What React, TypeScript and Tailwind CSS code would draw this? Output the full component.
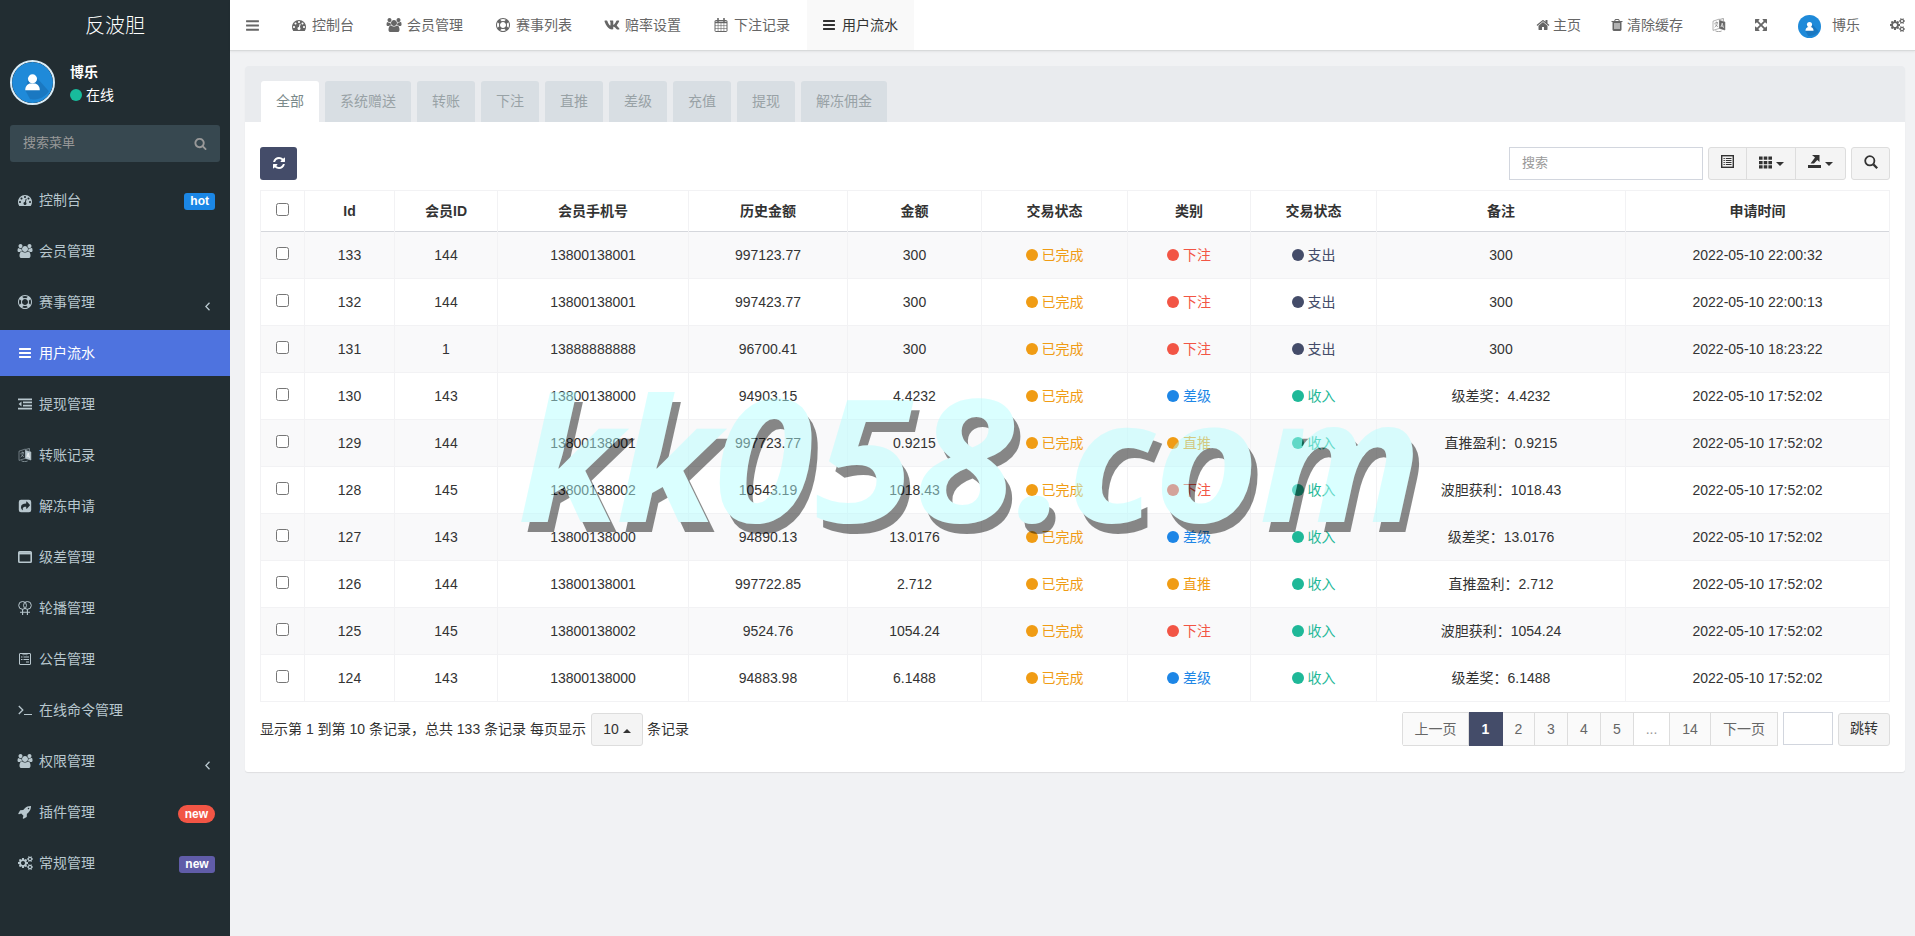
import React, { useState } from 'react'
import { FaVk } from 'react-icons/fa'

const PATHS = {
  bars: 'M1664 1344v128q0 26-19 45t-45 19h-1408q-26 0-45-19t-19-45v-128q0-26 19-45t45-19h1408q26 0 45 19t19 45zm0-512v128q0 26-19 45t-45 19h-1408q-26 0-45-19t-19-45v-128q0-26 19-45t45-19h1408q26 0 45 19t19 45zm0-512v128q0 26-19 45t-45 19h-1408q-26 0-45-19t-19-45v-128q0-26 19-45t45-19h1408q26 0 45 19t19 45z',
  dashboard:
    'M384 1152q0-53-37.5-90.5t-90.5-37.5-90.5 37.5-37.5 90.5 37.5 90.5 90.5 37.5 90.5-37.5 37.5-90.5zm192-448q0-53-37.5-90.5t-90.5-37.5-90.5 37.5-37.5 90.5 37.5 90.5 90.5 37.5 90.5-37.5 37.5-90.5zm428 481l101-382q6-26-7.5-48.5t-38.5-29.5-48 6.5-30 39.5l-101 382q-60 5-107 43.5t-63 98.5q-20 77 20 146t117 89 146-20 89-117q16-60-6-117t-72-91zm660-33q0-53-37.5-90.5t-90.5-37.5-90.5 37.5-37.5 90.5 37.5 90.5 90.5 37.5 90.5-37.5 37.5-90.5zm-640-640q0-53-37.5-90.5t-90.5-37.5-90.5 37.5-37.5 90.5 37.5 90.5 90.5 37.5 90.5-37.5 37.5-90.5zm448 192q0-53-37.5-90.5t-90.5-37.5-90.5 37.5-37.5 90.5 37.5 90.5 90.5 37.5 90.5-37.5 37.5-90.5zm320 448q0 261-141 483-19 29-54 29h-1402q-35 0-54-29-141-221-141-483 0-182 71-348t191-286 286-191 348-71 348 71 286 191 191 286 71 348z',
  ring: 'M896 0q182 0 348 71t286 191 191 286 71 348-71 348-191 286-286 191-348 71-348-71-286-191-191-286-71-348 71-348 191-286 286-191 348-71zm0 128q-190 0-361 90l194 194q82-28 167-28t167 28l194-194q-171-90-361-90zm-678 1129l194-194q-28-82-28-167t28-167l-194-194q-90 171-90 361t90 361zm678 407q190 0 361-90l-194-194q-82 28-167 28t-167-28l-194 194q171 90 361 90zm0-384q159 0 271.5-112.5t112.5-271.5-112.5-271.5-271.5-112.5-271.5 112.5-112.5 271.5 112.5 271.5 271.5 112.5zm484-217l194 194q90-171 90-361t-90-361l-194 194q28 82 28 167t-28 167z',
  home: 'M1472 992v480q0 26-19 45t-45 19h-384v-384h-256v384h-384q-26 0-45-19t-19-45v-480q0-1 .5-3t.5-3l575-474 575 474q1 2 1 6zm223-69l-62 74q-8 9-21 11h-3q-13 0-21-7l-692-577-692 577q-12 8-24 7-13-2-21-11l-62-74q-8-10-7-23.5t11-21.5l719-599q32-26 76-26t76 26l244 204v-195q0-14 9-23t23-9h192q14 0 23 9t9 23v408l219 182q10 8 11 21.5t-7 23.5z',
  trash:
    'M704 1376v-704q0-14-9-23t-23-9h-64q-14 0-23 9t-9 23v704q0 14 9 23t23 9h64q14 0 23-9t9-23zm256 0v-704q0-14-9-23t-23-9h-64q-14 0-23 9t-9 23v704q0 14 9 23t23 9h64q14 0 23-9t9-23zm256 0v-704q0-14-9-23t-23-9h-64q-14 0-23 9t-9 23v704q0 14 9 23t23 9h64q14 0 23-9t9-23zm-544-992h448l-48-117q-7-9-17-11h-317q-10 2-17 11zm928 32v64q0 14-9 23t-23 9h-96v948q0 83-47 143.5t-113 60.5h-832q-66 0-113-58.5t-47-141.5v-952h-96q-14 0-23-9t-9-23v-64q0-14 9-23t23-9h309l70-167q15-37 54-63t79-26h320q40 0 79 26t54 63l70 167h309q14 0 23 9t9 23z',
  arrows:
    'M1411 541l-355 355 355 355 144-144q29-31 70-14 39 17 39 59v448q0 26-19 45t-45 19h-448q-42 0-59-40-17-39 14-69l144-144-355-355-355 355 144 144q31 30 14 69-17 40-59 40h-448q-26 0-45-19t-19-45v-448q0-42 40-59 39-17 69 14l144 144 355-355-355-355-144 144q-19 19-45 19-12 0-24-5-40-17-40-59v-448q0-26 19-45t45-19h448q42 0 59 40 17 39-14 69l-144 144 355 355 355-355-144-144q-31-30-14-69 17-40 59-40h448q26 0 45 19t19 45v448q0 42-39 59-13 5-25 5-26 0-45-19z',
  refresh:
    'M1639 1056q0 5-1 7-64 268-268 434.5t-478 166.5q-146 0-282.5-55t-243.5-157l-129 129q-19 19-45 19t-45-19-19-45v-448q0-26 19-45t45-19h448q26 0 45 19t19 45-19 45l-137 137q71 66 161 102t187 36q134 0 250-65t186-179q11-17 53-117 8-23 30-23h192q13 0 22.5 9.5t9.5 22.5zm25-800v448q0 26-19 45t-45 19h-448q-26 0-45-19t-19-45 19-45l138-138q-148-137-349-137-134 0-250 65t-186 179q-11 17-53 117-8 23-30 23h-199q-13 0-22.5-9.5t-9.5-22.5v-7q65-268 270-434.5t480-166.5q146 0 284 55.5t245 156.5l130-129q19-19 45-19t45 19 19 45z',
  rocket:
    'M1440 448q0-40-28-68t-68-28-68 28-28 68 28 68 68 28 68-28 28-68zm224-288q0 249-75.5 430.5t-253.5 360.5q-81 80-195 176l-20 379q-2 16-16 26l-384 224q-7 4-16 4-12 0-23-9l-64-64q-13-14-8-32l85-276-281-281-276 85q-3 1-9 1-14 0-23-9l-64-64q-17-19-5-39l224-384q10-14 26-16l379-20q96-114 176-195 188-187 358-258t431-71q14 0 24 9.5t10 22.5z',
  search:
    'M1216 832q0-185-131.5-316.5t-316.5-131.5-316.5 131.5-131.5 316.5 131.5 316.5 316.5 131.5 316.5-131.5 131.5-316.5zm512 832q0 52-38 90t-90 38q-54 0-90-38l-343-342q-179 124-399 124-143 0-273.5-55.5t-225-150-150-225-55.5-273.5 55.5-273.5 150-225 225-150 273.5-55.5 273.5 55.5 225 150 150 225 55.5 273.5q0 220-124 399l343 343q37 37 37 90z',
}

const USERS =
  'M657 896q-162 5-265 128h-134q-82 0-138-40.5t-56-118.5q0-353 124-353 6 0 43.5 21t97.5 42.5 119 21.5q67 0 133-23-5 37-5 66 0 159 90 293zm1071 637q0 120-73 189.5t-194 69.5h-874q-121 0-194-69.5t-73-189.5q0-53 3.5-103.5t14-109 26.5-108.5 43-97.5 62-81 85.5-53.5 111.5-20q10 0 43 21.5t73 48 107 48 135 21.5 135-21.5 107-48 73-48 43-21.5q61 0 111.5 20t85.5 53.5 62 81 43 97.5 26.5 108.5 14 109 3.5 103.5zm-1024-1277q0 106-75 181t-181 75-181-75-75-181 75-181 181-75 181 75 75 181zm704 384q0 159-112.5 271.5t-271.5 112.5-271.5-112.5-112.5-271.5 112.5-271.5 271.5-112.5 271.5 112.5 112.5 271.5zm576 225q0 78-56 118.5t-138 40.5h-134q-103-123-265-128 90-134 90-293 0-29-5-66 66 23 133 23 59 0 119-21.5t97.5-42.5 43.5-21q124 0 124 353zm-128-609q0 106-75 181t-181 75-181-75-75-181 75-181 181-75 181 75 75 181z'

const COGS =
  'M896 896q0-106-75-181t-181-75-181 75-75 181 75 181 181 75 181-75 75-181zm768 512q0-52-38-90t-90-38-90 38-38 90q0 53 37.5 90.5t90.5 37.5 90.5-37.5 37.5-90.5zm0-1024q0-52-38-90t-90-38-90 38-38 90q0 53 37.5 90.5t90.5 37.5 90.5-37.5 37.5-90.5zm-384 421v185q0 10-7 19.5t-16 10.5l-155 24q-11 35-32 76 34 48 90 115 7 11 7 20 0 12-7 19-23 30-82.5 89.5t-78.5 59.5q-11 0-21-7l-115-90q-37 19-77 31-11 108-23 155-7 24-30 24h-186q-11 0-20-7.5t-10-17.5l-23-153q-34-10-75-31l-118 89q-7 7-20 7-11 0-21-8-144-133-144-160 0-9 7-19 10-14 41-53t47-61q-23-44-35-82l-152-24q-10-1-17-9.5t-7-19.5v-185q0-10 7-19.5t16-10.5l155-24q11-35 32-76-34-48-90-115-7-11-7-20 0-12 7-20 22-30 82-89t79-59q11 0 21 7l115 90q34-18 77-32 11-108 23-154 7-24 30-24h186q11 0 20 7.5t10 17.5l23 153q34 10 75 31l118-89q8-7 20-7 11 0 21 8 144 133 144 160 0 9-7 19-12 16-42 54t-45 60q23 48 34 82l152 23q10 2 17 10.5t7 19.5zm640 533v140q0 16-149 31-12 27-30 52 51 113 51 138 0 4-4 7-122 71-124 71-8 0-46-47t-52-68q-20 2-30 2t-30-2q-14 21-52 68t-46 47q-2 0-124-71-4-3-4-7 0-25 51-138-18-25-30-52-149-15-149-31v-140q0-16 149-31 13-29 30-52-51-113-51-138 0-4 4-7 4-2 35-20t59-34 30-16q8 0 46 46.5t52 67.5q20-2 30-2t30 2q51-71 92-112l6-2q4 0 124 70 4 3 4 7 0 25-51 138 17 23 30 52 149 15 149 31zm0-1024v140q0 16-149 31-12 27-30 52 51 113 51 138 0 4-4 7-122 71-124 71-8 0-46-47t-52-68q-20 2-30 2t-30-2q-14 21-52 68t-46 47q-2 0-124-71-4-3-4-7 0-25 51-138-18-25-30-52-149-15-149-31v-140q0-16 149-31 13-29 30-52-51-113-51-138 0-4 4-7 4-2 35-20t59-34 30-16q8 0 46 46.5t52 67.5q20-2 30-2t30 2q51-71 92-112l6-2q4 0 124 70 4 3 4 7 0 25-51 138 17 23 30 52 149 15 149 31z'

const Fa = ({
  name,
  className = 'size-3.5',
}: {
  name: keyof typeof PATHS
  className?: string
}) => (
  <svg viewBox="0 0 1792 1792" fill="currentColor" className={className}>
    <path d={PATHS[name]} />
  </svg>
)

const Users = () => (
  <svg viewBox="0 0 2048 1792" fill="currentColor" className="h-3.5 w-4">
    <path d={USERS} />
  </svg>
)

const Cogs = () => (
  <svg viewBox="0 0 1920 1792" fill="currentColor" className="h-3.5 w-[15px]">
    <path d={COGS} />
  </svg>
)

const Calendar = () => (
  <svg viewBox="0 0 14 14" fill="none" stroke="currentColor" className="size-3.5">
    <rect x="1" y="2.5" width="12" height="11" rx="0.6" />
    <path d="M1 4.4h12" strokeWidth="1.6" />
    <path d="M1 7.6h12M1 10.5h12M4.1 5v8.5M7 5v8.5M9.9 5v8.5" strokeWidth="0.6" />
    <path d="M4 .4v3M10 .4v3" strokeWidth="1.6" strokeLinecap="round" />
  </svg>
)

const Outdent = () => (
  <svg viewBox="0 0 14 14" fill="currentColor" className="size-3.5">
    <path d="M0 1.5h14v1.7H0zM5 4.6h9v1.7H5zM5 7.7h9v1.7H5zM0 10.8h14v1.7H0zM3.5 4.4v5.2L.6 7z" />
  </svg>
)

const Language = () => (
  <svg viewBox="0 0 14 14" fill="none" stroke="currentColor" className="size-3.5">
    <path d="M1 3.2 7.4 1v9.4L1 12.4z" strokeWidth="0.5" />
    <path d="M2.4 5.4 6 4.4M4.3 3.6v1.2M5.4 5c-.5 2-1.4 3.3-2.8 4.2M3.1 6.4c.6 1 1.5 1.7 2.9 2.2" strokeWidth="0.6" />
    <path d="M7.6 2.4 12.9 4v8L7.6 10.4z" fill="currentColor" strokeWidth="0.6" />
    <path d="M3.4 12.8c2 1.1 4.2 1.1 6.2.2M8 1.4l3.4-.9v2.4" strokeWidth="0.6" />
    <path d="m8.900 9.100 1.300-4 1.300 4.800M9.300 7.900l1.800.500" stroke="#fff" strokeOpacity="0.800" strokeWidth="0.800" />
  </svg>
)

const ShareSquare = () => (
  <svg viewBox="0 0 14 14" fill="currentColor" className="size-3.5">
    <path
      fillRule="evenodd"
      d="M3 .8h8A2.200 2.200 0 0 1 13.200 3v8A2.200 2.200 0 0 1 11 13.200H3A2.200 2.200 0 0 1 .8 11V3A2.200 2.200 0 0 1 3 .8zM8.200 2.800v1.700C4.800 4.500 3 5.800 3 8.200c0 1.200.6 2.200 1.600 3 .2.100.400 0 .300-.2C4.300 8.500 5.400 7.700 8.200 7.700v1.700c0 .4.400.5.700.3l2.900-3.200c.2-.2.200-.5 0-.7L8.900 2.500c-.3-.2-.7-.1-.7.300z"
    />
  </svg>
)

const Window = () => (
  <svg viewBox="0 0 14 14" fill="none" stroke="currentColor" className="size-3.5">
    <rect x="0.800" y="1.800" width="12.400" height="10.400" rx="0.800" strokeWidth="1.600" />
    <path d="M1 3.300h12" strokeWidth="2.200" />
  </svg>
)

const VenusDouble = () => (
  <svg viewBox="0 0 14 14" fill="none" stroke="currentColor" className="size-3.5">
    <circle cx="4.600" cy="4.400" r="3.900" />
    <circle cx="9.400" cy="4.400" r="3.900" />
    <path d="M4.600 8.300V14M9.400 8.300V14M2 11.300h10" strokeWidth="1.100" />
  </svg>
)

const Wpforms = () => (
  <svg viewBox="0 0 14 14" fill="none" stroke="currentColor" className="size-3.5">
    <rect x="1.500" y="1.500" width="11" height="11" rx="0.500" />
    <path d="M4 1.500 5.700 3 7 1.700 8.300 3 10 1.500" strokeWidth="0.800" />
    <path d="M3 5h1.500M3 7.500h1.500M5.500 5H11M5.500 7.500H11M8 10h3" strokeWidth="1.200" />
  </svg>
)

const Terminal = () => (
  <svg viewBox="0 0 14 14" fill="none" stroke="currentColor" className="size-3.5">
    <path d="m.8 3 4 4-4 4" strokeWidth="1.300" />
    <path d="M6 11.500h8" />
  </svg>
)

const AngleLeft = () => (
  <svg viewBox="0 0 5 9" fill="none" stroke="currentColor" strokeWidth="1.300" className="mt-2 mr-[5px] ml-auto h-[9px] w-[5px]">
    <path d="M4.500.7.900 4.500l3.600 3.800" />
  </svg>
)

const Avatar = ({ className }: { className: string }) => (
  <svg viewBox="0 0 45 45" className={className}>
    <circle cx="22.500" cy="22.500" r="22.500" fill="#1f8ad9" />
    <path d="M17.500 19 14.500 31 20 41c9 1 17-3 20.500-9L27 17z" fill="#176db0" opacity=".6" />
    <circle cx="22.500" cy="18.500" r="5" fill="#fff" />
    <path d="M14.500 31c0-5 3-7.500 6-7.500h4c3 0 6 2.500 6 7.500z" fill="#fff" />
  </svg>
)

const Dot = () => <span className="mr-1 size-3 shrink-0 rounded-full bg-current" />

const Caret = ({ up = false }: { up?: boolean }) => (
  <svg viewBox="0 0 8 4" className="ml-1 h-1 w-2" fill="currentColor">
    <path d={up ? 'M0 4h8L4 0z' : 'M0 0h8L4 4z'} />
  </svg>
)

const menu = [
  { icon: <Fa name="dashboard" />, label: '控制台', badge: 'hot' },
  { icon: <Users />, label: '会员管理' },
  { icon: <Fa name="ring" />, label: '赛事管理', arrow: true },
  { icon: <Fa name="bars" />, label: '用户流水', active: true },
  { icon: <Outdent />, label: '提现管理' },
  { icon: <Language />, label: '转账记录' },
  { icon: <ShareSquare />, label: '解冻申请' },
  { icon: <Window />, label: '级差管理' },
  { icon: <VenusDouble />, label: '轮播管理' },
  { icon: <Wpforms />, label: '公告管理' },
  { icon: <Terminal />, label: '在线命令管理' },
  { icon: <Users />, label: '权限管理', arrow: true },
  { icon: <Fa name="rocket" />, label: '插件管理', badge: 'new' },
  { icon: <Cogs />, label: '常规管理', badge: 'new2' },
]

const navs = [
  { icon: <Fa name="dashboard" />, label: '控制台' },
  { icon: <Users />, label: '会员管理' },
  { icon: <Fa name="ring" />, label: '赛事列表' },
  { icon: <FaVk className="size-4" />, label: '赔率设置' },
  { icon: <Calendar />, label: '下注记录' },
  { icon: <Fa name="bars" />, label: '用户流水', active: true },
]

const tabs = ['全部', '系统赠送', '转账', '下注', '直推', '差级', '充值', '提现', '解冻佣金']

const columns = [
  { title: 'Id', width: 'w-[90px]' },
  { title: '会员ID', width: 'w-[103px]' },
  { title: '会员手机号', width: 'w-[191px]' },
  { title: '历史金额', width: 'w-[159px]' },
  { title: '金额', width: 'w-[134px]' },
  { title: '交易状态', width: 'w-[146px]' },
  { title: '类别', width: 'w-[123px]' },
  { title: '交易状态', width: 'w-[126px]' },
  { title: '备注', width: 'w-[249px]' },
  { title: '申请时间', width: 'w-[264px]' },
]

const rows = [
  ['133', '144', '13800138001', '997123.77', '300', '下注', '支出', '300', '2022-05-10 22:00:32'],
  ['132', '144', '13800138001', '997423.77', '300', '下注', '支出', '300', '2022-05-10 22:00:13'],
  ['131', '1', '13888888888', '96700.41', '300', '下注', '支出', '300', '2022-05-10 18:23:22'],
  ['130', '143', '13800138000', '94903.15', '4.4232', '差级', '收入', '级差奖：4.4232', '2022-05-10 17:52:02'],
  ['129', '144', '13800138001', '997723.77', '0.9215', '直推', '收入', '直推盈利：0.9215', '2022-05-10 17:52:02'],
  ['128', '145', '13800138002', '10543.19', '1018.43', '下注', '收入', '波胆获利：1018.43', '2022-05-10 17:52:02'],
  ['127', '143', '13800138000', '94890.13', '13.0176', '差级', '收入', '级差奖：13.0176', '2022-05-10 17:52:02'],
  ['126', '144', '13800138001', '997722.85', '2.712', '直推', '收入', '直推盈利：2.712', '2022-05-10 17:52:02'],
  ['125', '145', '13800138002', '9524.76', '1054.24', '下注', '收入', '波胆获利：1054.24', '2022-05-10 17:52:02'],
  ['124', '143', '13800138000', '94883.98', '6.1488', '差级', '收入', '级差奖：6.1488', '2022-05-10 17:52:02'],
]

const colors: Record<string, string> = {
  已完成: 'text-[#f09c14]',
  下注: 'text-[#f25545]',
  差级: 'text-[#1d86e6]',
  直推: 'text-[#f09c14]',
  支出: 'text-[#444c69]',
  收入: 'text-[#1fb898]',
}

const Status = ({ text }: { text: string }) => (
  <span className={`flex items-center justify-center ${colors[text]}`}>
    <Dot />
    {text}
  </span>
)

const Check = () => (
  <input
    type="checkbox"
    className="block mx-auto mb-[3px] size-[13px] appearance-none rounded-[2.5px] border border-[#767676] bg-white"
  />
)

const Sidebar = () => (
  <aside className="flex w-[230px] shrink-0 flex-col bg-[#222d32] text-[#b8c7ce]">
    <h1 className="flex h-[50px] items-center justify-center pt-0.5 text-xl font-light text-white">反波胆</h1>
    <div className="flex px-2.5 pt-2.5 text-white">
      <Avatar className="size-[45px] rounded-full border-2 border-[#d9ecf7]" />
      <div className="ml-[15px] leading-5">
        <p className="mt-0.5 font-bold">博乐</p>
        <p className="mt-[3px] flex items-center">
          <span className="flex text-[#18bc9c]">
            <Dot />
          </span>
          在线
        </p>
      </div>
    </div>
    <div className="mx-2.5 mt-5 flex h-[37px] items-center justify-between rounded-[3px] bg-[#374850] pr-[13px] pl-[13px] text-[13px] text-[#999]">
      搜索菜单
      <Fa name="search" className="size-[13px]" />
    </div>
    <ul className="mt-[15px] flex flex-col gap-[5px]">
      {menu.map((item) => (
        <li
          key={item.label}
          className={`flex h-[46px] items-center pr-[15px] pl-[15px] ${item.active ? 'bg-[#4e73df] text-white' : ''}`}
        >
          <span className="mr-1 flex w-5 justify-center">{item.icon}</span>
          {item.label}
          {item.arrow && <AngleLeft />}
          {item.badge === 'hot' && (
            <span className="mt-0.5 ml-auto flex h-[17px] items-center rounded-[3px] bg-[#1b87e6] px-1.5 text-xs font-bold text-white">
              hot
            </span>
          )}
          {item.badge === 'new' && (
            <span className="mt-[3px] ml-auto flex h-[18px] items-center rounded-full bg-[#f25545] px-[7px] text-xs font-bold text-white">
              new
            </span>
          )}
          {item.badge === 'new2' && (
            <span className="mt-0.5 ml-auto flex h-[17px] w-9 items-center justify-center rounded-[3px] bg-[#605ca8] text-xs font-bold text-white">
              new
            </span>
          )}
        </li>
      ))}
    </ul>
  </aside>
)

const Header = () => (
  <header className="z-10 flex h-[51px] shrink-0 items-center border-b border-[#d8dadb] bg-white text-[#666] shadow-[0_1px_2px_rgba(0,0,0,.06)]">
    <span className="ml-[15px] w-[30px]">
      <Fa name="bars" className="size-[15px]" />
    </span>
    <nav className="flex h-full">
      {navs.map((nav) => (
        <a
          key={nav.label}
          className={`flex h-full items-center ${
            nav.active
              ? 'ml-px w-[107px] bg-[#f9f9f9] pl-[13px] text-[#333]'
              : nav.label.length === 3
                ? 'w-[95px] pl-[15px]'
                : 'w-[109px] pl-[15px]'
          }`}
        >
          <span className="mr-1 flex w-[18px] justify-center">{nav.icon}</span>
          {nav.label}
        </a>
      ))}
    </nav>
    <div className="mr-2.5 ml-auto flex items-center">
      <span className="mr-[29px] flex items-center gap-[3px]">
        <Fa name="home" /> 主页
      </span>
      <span className="mr-[29px] flex items-center gap-[3px]">
        <Fa name="trash" /> 清除缓存
      </span>
      <span className="mr-7">
        <Language />
      </span>
      <span className="mr-[30px]">
        <Fa name="arrows" />
      </span>
      <Avatar className="mt-0.5 mr-[11px] size-[23px]" />
      <span className="mr-[30px]">博乐</span>
      <Cogs />
    </div>
  </header>
)

const Toolbar = () => (
  <div className="flex h-[33px] justify-between text-[#333]">
    <button className="flex w-[37px] items-center justify-center rounded-[3px] bg-[#444c69] pb-0.5 text-white">
      <Fa name="refresh" className="size-3.5" />
    </button>
    <div className="flex">
      <input
        placeholder="搜索"
        className="mr-[5px] w-[194px] border border-[#d2d6de] pl-3 text-[13px] placeholder:text-[#999]"
      />
      <div className="mr-[5px] flex divide-x divide-[#ddd] rounded-[3px] border border-[#ddd] bg-[#f4f4f4]">
        <span className="flex w-[38px] items-center justify-center pb-1">
          <svg viewBox="0 0 13 13" fill="none" stroke="currentColor" className="size-[13px]">
            <rect x="0.700" y="0.700" width="11.600" height="11.600" strokeWidth="1.400" />
            <path
              d="M2.500 3.500h1.300M2.500 5.500h1.300M2.500 7.500h1.300M2.500 9.500h1.300M4.800 3.500h5.700M4.800 5.500h5.700M4.800 7.500h5.700M4.800 9.500h5.700"
              strokeWidth="1.200"
            />
          </svg>
        </span>
        <span className="flex w-[49px] items-center justify-center pb-[3px]">
          <svg viewBox="0 0 13 13" fill="currentColor" className="size-[13px]">
            <path d="M0 .5h3.600v3.300H0zM4.700.5h3.600v3.300H4.700zM9.400.5H13v3.300H9.400zM0 4.900h3.600v3.300H0zM4.700 4.900h3.600v3.300H4.700zM9.400 4.900H13v3.300H9.400zM0 9.300h3.600v3.300H0zM4.700 9.300h3.600v3.300H4.700zM9.400 9.300H13v3.300H9.400z" />
          </svg>
          <span className="mt-1">
            <Caret />
          </span>
        </span>
        <span className="flex w-[49px] items-center justify-center pb-1">
          <svg viewBox="0 0 13 13" fill="currentColor" className="size-[13px]">
            <path d="M0 10h13v3H0zM4 0h7.500v7L9.300 4.900 6 8.500H2.500L7 2.500z" />
          </svg>
          <span className="mt-1">
            <Caret />
          </span>
        </span>
      </div>
      <span className="flex w-[39px] items-center justify-center rounded-[3px] border border-[#ddd] bg-[#f4f4f4] pb-1">
        <svg viewBox="0 0 14 14" fill="none" stroke="currentColor" className="size-3.5">
          <circle cx="5.800" cy="5.800" r="4.600" strokeWidth="1.800" />
          <path d="m9.400 9.400 3.800 3.800" strokeWidth="2.200" />
        </svg>
      </span>
    </div>
  </div>
)

const Table = () => (
  <table className="mt-2.5 w-[1630px] table-fixed border-collapse text-center text-[#333]">
    <thead>
      <tr className="h-[41px] border-b border-[#d5d7dc]">
        <th className="w-11 border-x border-t border-[#f2f2f4]">
          <Check />
        </th>
        {columns.map((col, idx) => (
          <th key={idx} className={`border-x border-t border-[#f2f2f4] font-bold ${col.width}`}>
            {col.title}
          </th>
        ))}
      </tr>
    </thead>
    <tbody>
      {rows.map((row) => (
        <tr key={row[0]} className="h-[47px] odd:bg-[#f9f9fa]">
          <td className="border-x border-b border-[#f2f2f4]">
            <Check />
          </td>
          {row.slice(0, 5).map((cell, idx) => (
            <td key={idx} className="border-x border-b border-[#f2f2f4]">
              {cell}
            </td>
          ))}
          <td className="border-x border-b border-[#f2f2f4]">
            <Status text="已完成" />
          </td>
          <td className="border-x border-b border-[#f2f2f4]">
            <Status text={row[5]} />
          </td>
          <td className="border-x border-b border-[#f2f2f4]">
            <Status text={row[6]} />
          </td>
          <td className="border-x border-b border-[#f2f2f4]">{row[7]}</td>
          <td className="border-x border-b border-[#f2f2f4]">{row[8]}</td>
        </tr>
      ))}
    </tbody>
  </table>
)

const pages = [
  { text: '上一页', style: 'w-[66px] bg-[#fafafa]' },
  { text: '1', style: 'w-[34px] bg-[#444c69] font-bold text-white' },
  { text: '2', style: 'w-[32px] bg-[#fafafa]' },
  { text: '3', style: 'w-[33px] bg-[#fafafa]' },
  { text: '4', style: 'w-[33px] bg-[#fafafa]' },
  { text: '5', style: 'w-[33px] bg-[#fafafa]' },
  { text: '...', style: 'w-[36px] text-[#999]' },
  { text: '14', style: 'w-[41px] bg-[#fafafa]' },
  { text: '下一页', style: 'w-[67px] bg-[#fafafa]' },
]

const Footer = () => (
  <div className="mt-2.5 flex items-start text-[#333]">
    <div className="mt-px flex h-[33px] items-center">
      <span className="pb-px">显示第 1 到第 10 条记录，总共 133 条记录 每页显示</span>
      <span className="mr-1 ml-[5px] flex h-[33px] w-[52px] items-center justify-center rounded-[3px] border border-[#ddd] bg-[#f4f4f4] pb-0.5">
        10
        <span className="mt-1">
          <Caret up />
        </span>
      </span>
      <span className="pb-px">条记录</span>
    </div>
    <div className="ml-auto flex">
      <div className="flex h-[34px] rounded-l-[3px] border-l border-[#ddd] text-[#666]">
        {pages.map((page) => (
          <span
            key={page.text}
            className={`flex items-center justify-center border-y border-r ${
              page.text === '1' ? 'border-[#444c69]' : 'border-[#ddd]'
            } ${page.style}`}
          >
            {page.text}
          </span>
        ))}
      </div>
      <input className="ml-[5px] h-[33px] w-[50px] border border-[#d2d6de]" />
      <button className="mt-px ml-[5px] h-[33px] w-[52px] rounded-[3px] border border-[#ddd] bg-[#f4f4f4] pb-[3px]">
        跳转
      </button>
    </div>
  </div>
)

const App = () => {
  const [tab, setTab] = useState('全部')
  return (
    <div className="relative flex h-[936px] overflow-hidden bg-[#f1f2f4] font-['Liberation_Sans','Noto_Sans_CJK_SC',sans-serif] text-sm">
      <Sidebar />
      <main className="flex min-w-0 flex-1 flex-col">
        <Header />
        <section className="mx-[15px] mt-[15px] mr-2.5 h-[706px] rounded-[3px] bg-white shadow-[0_1px_1px_rgba(0,0,0,.08)]">
          <div className="flex h-14 items-end gap-1.5 rounded-t-[3px] bg-[#e9ebee] pl-4">
            {tabs.map((name) => (
              <button
                key={name}
                onClick={() => setTab(name)}
                className={`h-[41px] rounded-t-[3px] px-[15px] pb-0.5 ${
                  tab === name ? 'bg-white text-[#7b8a8b]' : 'bg-[#d8dee3] text-[#98a2a6]'
                }`}
              >
                {name}
              </button>
            ))}
          </div>
          <div className="px-[15px] pt-[25px]">
            <Toolbar />
            <Table />
            <Footer />
          </div>
        </section>
      </main>
      <div className="pointer-events-none absolute top-[370px] left-[518px] z-20 origin-left scale-x-[1.052] font-['Open_Sans',sans-serif] text-[171px] leading-none font-bold whitespace-nowrap text-[#b0ffff] italic opacity-[0.46] [text-shadow:6px_10px_0_#000]">
        <span className="tracking-[-4px]">kk</span>
        <span className="tracking-[1.5px]">058</span>.com
      </div>
    </div>
  )
}

export default App
